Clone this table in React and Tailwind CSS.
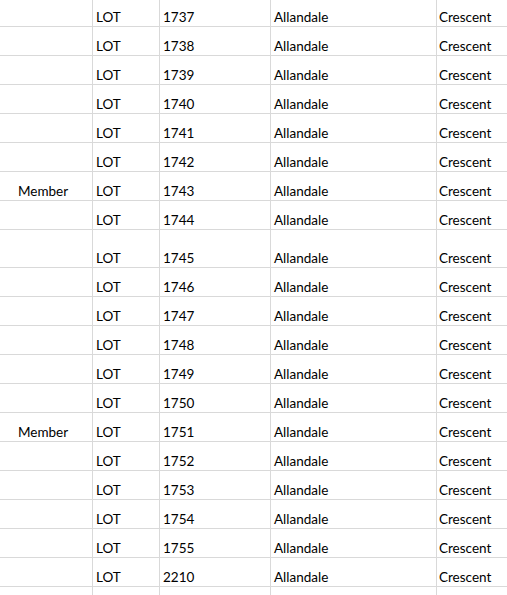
const rows = [
  { lot: "1737", h: "h-[27px]" },
  { lot: "1738" },
  { lot: "1739" },
  { lot: "1740" },
  { lot: "1741" },
  { lot: "1742" },
  { lot: "1743", member: true },
  { lot: "1744" },
  { lot: "1745", h: "h-[38px]" },
  { lot: "1746" },
  { lot: "1747" },
  { lot: "1748" },
  { lot: "1749" },
  { lot: "1750" },
  { lot: "1751", member: true },
  { lot: "1752" },
  { lot: "1753" },
  { lot: "1754" },
  { lot: "1755" },
  { lot: "2210" },
  { lot: "", h: "h-[20px]" },
];

function Row({ lot, member, h = "h-[29px]" }) {
  const cell = "flex items-end pb-[2px] border-r border-[#d9d9d9]";
  return (
    <div className={`grid grid-cols-[93px_67px_111px_166px_1fr] border-b border-[#d9d9d9] ${h}`}>
      <div className={`${cell} pl-[18px]`}>{member ? "Member" : ""}</div>
      <div className={`${cell} pl-[3px]`}>{lot ? "LOT" : ""}</div>
      <div className={`${cell} pl-[3px]`}>{lot}</div>
      <div className={`${cell} pl-[3px]`}>{lot ? "Allandale" : ""}</div>
      <div className="flex items-end pb-[2px] pl-[2px]">{lot ? "Crescent" : ""}</div>
    </div>
  );
}

export default function App() {
  return (
    <div className="w-[507px] h-[595px] overflow-hidden bg-white text-black text-[13.5px] leading-none font-['Lato',sans-serif]">
      {rows.map((r, i) => (
        <Row key={i} {...r} />
      ))}
    </div>
  );
}
